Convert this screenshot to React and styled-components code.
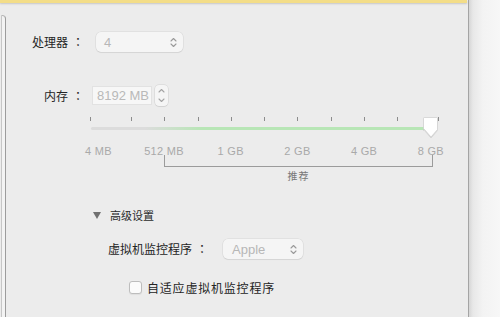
import React from 'react';
import styled, { createGlobalStyle } from 'styled-components';

const GlobalStyle = createGlobalStyle`
  html, body {
    margin: 0;
    padding: 0;
    overflow: hidden;
    background: #ececec;
  }
  body {
    font-family: "Noto Sans CJK SC", "Liberation Sans", sans-serif;
    -webkit-font-smoothing: antialiased;
  }
`;

const Window = styled.div`
  display: flex;
  width: 500px;
  height: 317px;
  overflow: hidden;
`;

const Main = styled.div`
  display: flex;
  flex-direction: column;
  width: 468px;
  background: #ececec;
  border-right: 1px solid #a4a4a4;
`;

const HighlightBar = styled.div`
  height: 3px;
  margin-right: 1px;
  background: #f3dd88;
  box-shadow: 0 1px 2px rgba(0, 0, 0, 0.16);
  position: relative;
  z-index: 1;
`;

const Body = styled.div`
  flex: 1;
  display: flex;
`;

const SideList = styled.div`
  width: 3px;
  margin: 12px 0 0 1px;
  background: #f3f3f3;
  border-left: 1px solid #c6c6c6;
  border-right: 1px solid #9c9c9c;
  border-top: 1px solid #b4b4b4;
  border-radius: 0 4px 0 0;
`;

const Form = styled.div`
  flex: 1;
  display: flex;
  flex-direction: column;
  color: #242424;
`;

const Row = styled.div`
  display: flex;
  align-items: center;
  height: ${(p) => p.$h || 20}px;
  margin-top: ${(p) => p.$top || 0}px;
  margin-left: ${(p) => p.$indent || 0}px;
`;

const Label = styled.div`
  width: ${(p) => p.$w || 78}px;
  text-align: right;
  font-size: 12px;
  line-height: 20px;
  white-space: nowrap;
  flex-shrink: 0;
`;

const Colon = styled.span`
  display: inline-block;
  width: 12px;
  margin-left: 4px;
  text-align: center;
  font-family: "Noto Sans CJK TC", sans-serif;
`;

const Popup = styled.div`
  display: flex;
  align-items: center;
  justify-content: space-between;
  box-sizing: border-box;
  width: ${(p) => p.$w}px;
  height: 20px;
  margin-left: ${(p) => p.$gap}px;
  padding: 0 6px 0 ${(p) => p.$pad || 8}px;
  background: #f5f5f5;
  border-radius: 5px;
  box-shadow: 0 0 0 0.5px rgba(0, 0, 0, 0.09), 0 1px 1px rgba(0, 0, 0, 0.06);
  font-family: "Liberation Sans", sans-serif;
  font-size: 13px;
  color: #b7b7b7;
`;

const Field = styled.div`
  box-sizing: border-box;
  width: 60px;
  height: 19px;
  margin-left: 8px;
  padding-left: 4px;
  background: #f7f7f7;
  border: 1px solid #e2e2e2;
  font-family: "Liberation Sans", sans-serif;
  font-size: 13px;
  line-height: 17px;
  color: #b9b9b9;
`;

const Stepper = styled.div`
  display: flex;
  flex-direction: column;
  align-items: center;
  justify-content: space-around;
  box-sizing: border-box;
  width: 13px;
  height: 21px;
  margin-left: 3px;
  background: #f5f5f5;
  border-radius: 4px;
  box-shadow: 0 0 0 0.5px rgba(0, 0, 0, 0.12), 0 1px 1px rgba(0, 0, 0, 0.05);
`;

const Slider = styled.div`
  display: flex;
  flex-direction: column;
  margin: 7px 0 0 79px;
  width: 380px;
`;

const Scale = styled.div`
  display: flex;
  height: 14px;
  margin-top: 3px;
`;

const ScaleLabel = styled.div`
  width: ${(p) => p.$w}px;
  flex-shrink: 0;
  text-align: ${(p) => (p.$first ? 'left' : 'center')};
  font-family: "Liberation Sans", sans-serif;
  font-size: 11px;
  line-height: 14px;
  letter-spacing: 0.3px;
  color: #a9a9a9;
  white-space: nowrap;
`;

const Bracket = styled.div`
  position: relative;
  width: 267px;
  height: 11px;
  margin: -3px 0 0 79px;
  border: 1px solid #9b9b9b;
  border-top: none;
`;

const Caption = styled.div`
  width: 267px;
  margin: 3px 0 0 80px;
  text-align: center;
  font-size: 10px;
  line-height: 12px;
  letter-spacing: 1px;
  color: #787878;
`;

const Disclosure = styled.div`
  display: flex;
  align-items: center;
  height: 14px;
  margin: 26px 0 0 87px;
  font-size: 11px;
  color: #2a2a2a;
`;

const Triangle = styled.span`
  width: 0;
  height: 0;
  margin-right: 9px;
  border-left: 4.5px solid transparent;
  border-right: 4.5px solid transparent;
  border-top: 7px solid #707070;
`;

const CheckRow = styled.label`
  display: flex;
  align-items: center;
  height: 14px;
  margin: 21px 0 0 123px;
  font-size: 12px;
  letter-spacing: 0.8px;
  color: #242424;
`;

const Box = styled.span`
  box-sizing: border-box;
  width: 13px;
  height: 13px;
  margin-right: 5px;
  background: #fbfbfb;
  border: 1px solid #bdbdbd;
  border-radius: 3px;
  box-shadow: 0 1px 1px rgba(0, 0, 0, 0.06);
`;

const Gutter = styled.div`
  flex: 1;
  background: linear-gradient(to right, #d6d6d6 0px, #e8e8e8 4px, #f3f3f3 14px, #f7f7f7 100%);
`;

const UpDown = () => (
  <svg width="7" height="11" viewBox="0 0 7 11">
    <path d="M1 4 L3.5 1.5 L6 4 M1 7 L3.5 9.5 L6 7" fill="none" stroke="#9a9a9a" strokeWidth="1.1" strokeLinecap="round" strokeLinejoin="round" />
  </svg>
);

const Chevron = ({ down }) => (
  <svg width="7" height="5" viewBox="0 0 7 5">
    <path d={down ? 'M1 1 L3.5 3.5 L6 1' : 'M1 4 L3.5 1.5 L6 4'} fill="none" stroke="#a4a4a4" strokeWidth="1.1" strokeLinecap="round" strokeLinejoin="round" />
  </svg>
);

// slider coordinates are local to x=85
const ticks = [5, 46, 79, 113, 146, 179, 212, 246, 279, 312, 353];
const scale = [
  { text: '4 MB', w: 45.7, first: true },
  { text: '512 MB', w: 66.7 },
  { text: '1 GB', w: 66.7 },
  { text: '2 GB', w: 66.7 },
  { text: '4 GB', w: 66.7 },
  { text: '8 GB', w: 66.7 },
];

const Track = () => (
  <svg width="360" height="28" viewBox="0 0 360 28">
    <defs>
      <linearGradient id="fill" x1="0" x2="1" y1="0" y2="0">
        <stop offset="0" stopColor="#dcdcdc" />
        <stop offset="0.2" stopColor="#b8e6b6" />
        <stop offset="1" stopColor="#b8e6b6" />
      </linearGradient>
      <filter id="shadow" x="-30%" y="-30%" width="160%" height="160%">
        <feDropShadow dx="0" dy="0.5" stdDeviation="0.6" floodColor="#000" floodOpacity="0.25" />
      </filter>
    </defs>
    {ticks.map((x) => (
      <rect key={x} x={x} y="4" width="1" height="4" fill="#8c8c8c" />
    ))}
    <rect x="6" y="14" width="73" height="3" rx="1.5" fill="#dcdcdc" />
    <rect x="60" y="14" width="286" height="3" fill="url(#fill)" />
    <path
      d="M339.5 4.5 L351.5 4.5 Q352.5 4.5 352.5 5.5 L352.5 16.5 L346 24 L339.5 16.5 L338.5 16.5 L338.5 5.5 Q338.5 4.5 339.5 4.5 Z"
      fill="#ffffff"
      stroke="#c9c9c9"
      strokeWidth="0.6"
      filter="url(#shadow)"
    />
  </svg>
);

export default function App() {
  return (
    <>
      <GlobalStyle />
      <Window>
        <Main>
          <HighlightBar />
          <Body>
            <SideList />
            <Form>
              <Row $top={29}>
                <Label>处理器<Colon>：</Colon></Label>
                <Popup $w={87} $gap={12}>
                  <span>4</span>
                  <UpDown />
                </Popup>
              </Row>
              <Row $top={33} $h={21}>
                <Label>内存<Colon>：</Colon></Label>
                <Field>8192 MB</Field>
                <Stepper>
                  <Chevron />
                  <Chevron down />
                </Stepper>
              </Row>
              <Slider>
                <Track />
                <Scale>
                  {scale.map((s) => (
                    <ScaleLabel key={s.text} $w={s.w} $first={s.first}>{s.text}</ScaleLabel>
                  ))}
                </Scale>
                <Bracket />
                <Caption>推荐</Caption>
              </Slider>
              <Disclosure>
                <Triangle />
                高级设置
              </Disclosure>
              <Row $top={17} $indent={102}>
                <Label $w={100}>虚拟机监控程序<Colon>：</Colon></Label>
                <Popup $w={80} $gap={15} $pad={9}>
                  <span>Apple</span>
                  <UpDown />
                </Popup>
              </Row>
              <CheckRow>
                <Box />
                自适应虚拟机监控程序
              </CheckRow>
            </Form>
          </Body>
        </Main>
        <Gutter />
      </Window>
    </>
  );
}
